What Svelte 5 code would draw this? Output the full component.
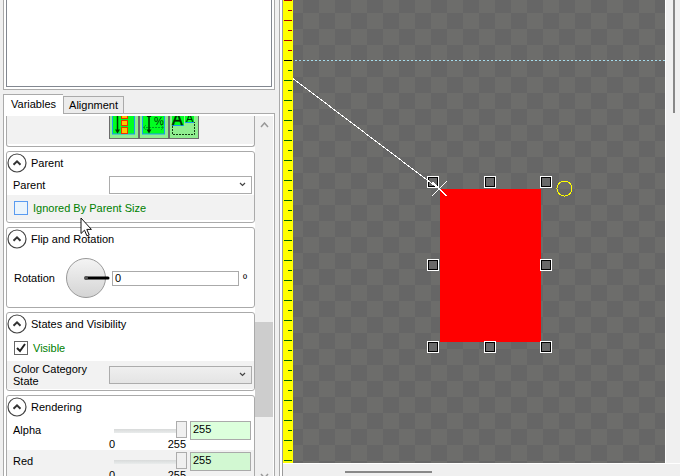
<script>
  const ticks = Array.from({ length: 47 }, (_, i) => ({
    y: i * 10,
    long: i % 2 === 0,
    color: i < 6 ? '#a80000' : i === 6 ? '#000' : '#006400'
  }));
  const handles = [
    [433, 182], [490, 182], [546, 182],
    [433, 265], [546, 265],
    [433, 347], [490, 347], [546, 347]
  ].map(([x, y]) => [x - 293, y]);
  const channels = [
    { name: 'Alpha', value: 255 },
    { name: 'Red', value: 255 }
  ];
  let rotation = $state('0');
  let visible = $state(true);
  let ignored = $state(false);
</script>

{#snippet header(title)}
  <div class="head">
    <button class="toggle" aria-label={`Collapse ${title}`}>
      <svg width="20" height="20" viewBox="0 0 20 20">
        <circle cx="10" cy="10" r="9" fill="#fff" stroke="#444" stroke-width="1.2" />
        <path d="M6.5 11.8 10 8.3l3.5 3.5" fill="none" stroke="#333" stroke-width="2" />
      </svg>
    </button>
    <h2>{title}</h2>
  </div>
{/snippet}

<div class="app">
  <aside>
    <div class="list"><div class="inner"></div></div>
    <div class="tabs" role="tablist">
      <button class="tab active" role="tab" aria-selected="true">Variables</button>
      <button class="tab" role="tab" aria-selected="false">Alignment</button>
    </div>
    <div class="pane">
      <div class="content">
        <section class="units">
          <div class="tools">
            <button aria-label="Units by container">
              <svg width="28" height="22" viewBox="0 0 28 22">
                <rect x="2.500" y="-2" width="22" height="20" fill="#00ff20" stroke="#1a9bf0" />
                <path d="M7.500 0v15" stroke="#003800" stroke-width="1.500" />
                <path d="M5 13.500h5l-2.500 4zM5 0h5L7.500-2z" fill="#003800" />
                <g fill="#ffc400" stroke="#f03000">
                  <rect x="11.500" y="-2.500" width="6" height="5" />
                  <rect x="11.500" y="4.500" width="6" height="5" />
                  <rect x="11.500" y="11.500" width="6" height="6" />
                </g>
              </svg>
            </button>
            <button aria-label="Percentage units">
              <svg width="28" height="22" viewBox="0 0 28 22">
                <rect x="2.500" y="-2" width="22" height="20" fill="#00ff20" stroke="#1a9bf0" />
                <path d="M3 11.500h21" stroke="#00a020" stroke-dasharray="2 1" />
                <path d="M6 9l-2.500 2.500L6 14M21 9l2.500 2.500L21 14" fill="none" stroke="#00b020" />
                <path d="M9 0v15" stroke="#002800" stroke-width="1.500" />
                <path d="M6.500 13.500h5L9 17.500zM6.500 1h5L9-2z" fill="#002800" />
                <text x="14" y="9" font-size="11" fill="#003000">%</text>
              </svg>
            </button>
            <button aria-label="Font scale">
              <svg width="28" height="22" viewBox="0 0 28 22">
                <rect x="2" y="-1" width="12" height="10" fill="#00ff20" />
                <rect x="15" y="-1" width="9" height="7" fill="#00ff20" />
                <path d="M2 9.500h12M15 6.500h9" stroke="#1a9bf0" />
                <text x="2" y="9" font-size="16" fill="#002800" stroke="#002800" stroke-width="0.500">A</text>
                <text x="16" y="6" font-size="11" fill="#002800">A</text>
                <path d="M2.500 10v8.500h22V6" fill="none" stroke="#143c14" stroke-dasharray="2 1" />
              </svg>
            </button>
          </div>
        </section>

        <section>
          {@render header('Parent')}
          <div class="row first">
            <label for="parent">Parent</label>
            <span class="combo">
              <select id="parent"><option></option></select>
              <svg class="arrow" width="7" height="5"><path d="M1 1l2.500 2.500L6 1" /></svg>
            </span>
          </div>
          <label class="check alt">
            <input type="checkbox" class="hover" bind:checked={ignored} />Ignored By Parent Size
          </label>
        </section>

        <section>
          {@render header('Flip and Rotation')}
          <div class="rotate">
            <label for="rotation">Rotation</label>
            <svg width="46" height="42" viewBox="0 0 46 42">
              <defs>
                <linearGradient id="dial" x1="0" y1="0" x2="0" y2="1">
                  <stop offset="0" stop-color="#f4f4f4" /><stop offset="1" stop-color="#d4d4d4" />
                </linearGradient>
              </defs>
              <circle cx="21" cy="21" r="19.500" fill="url(#dial)" stroke="#999" />
              <path d="M21 21h22" stroke="#000" stroke-width="3" stroke-linecap="round" />
              <circle cx="21" cy="21" r="2" fill="#555" />
            </svg>
            <input id="rotation" type="text" bind:value={rotation} />
            <span class="deg">º</span>
          </div>
        </section>

        <section>
          {@render header('States and Visibility')}
          <label class="check tall">
            <input type="checkbox" bind:checked={visible} />Visible
          </label>
          <div class="row alt tall">
            <label for="category">Color Category State</label>
            <span class="combo">
              <select id="category" class="shaded"><option></option></select>
              <svg class="arrow" width="7" height="5"><path d="M1 1l2.500 2.500L6 1" /></svg>
            </span>
          </div>
        </section>

        <section class="rendering">
          {@render header('Rendering')}
          {#each channels as c, i}
            <div class="channel" class:alt={i % 2 === 1}>
              <label for={c.name}>{c.name}</label>
              <div class="slide">
                <input type="range" min="0" max="255" value={c.value} aria-label={c.name} />
                <div class="ends"><span>0</span><span>255</span></div>
              </div>
              <input id={c.name} class="num" type="text" value={c.value} />
            </div>
          {/each}
        </section>
      </div>
      <div class="scroll">
        <svg width="9" height="6"><path d="M1 5l3.500-4L8 5" /></svg>
        <div class="thumb"></div>
        <svg width="9" height="6"><path d="M1 1l3.500 4L8 1" /></svg>
      </div>
    </div>
    <svg class="cursor" width="12" height="20" viewBox="0 0 12 20" aria-hidden="true">
      <path d="M1 1v15.500l3.500-3.300 2.400 5.600 2.300-1-2.400-5.400h4.600z" fill="#fff" stroke="#111" />
    </svg>
  </aside>

  <div class="splitter"></div>

  <main>
    <div class="stage">
      <svg class="ruler" width="10" height="100%">
        {#each ticks as t}
          <rect x={t.long ? 1 : 5} y={t.y} width={t.long ? 8 : 4} height="1" fill={t.color} />
        {/each}
      </svg>
      <svg class="canvas" width="100%" height="100%" shape-rendering="crispEdges">
        <defs>
          <pattern id="checker" x="10" y="13" width="32" height="32" patternUnits="userSpaceOnUse">
            <rect width="32" height="32" fill="#666" />
            <path d="M0 0h16v32h16V16H0z" fill="#6d6d6b" />
          </pattern>
        </defs>
        <rect width="100%" height="100%" fill="url(#checker)" />
        <line x1="2" y1="60.500" x2="100%" y2="60.500" stroke="#a5dcec" stroke-dasharray="2 2" />
        <rect x="147" y="189" width="101" height="153" fill="#f00" />
        {#each handles as [x, y]}
          <rect x={x - 5.5} y={y - 5.5} width="11" height="11" fill="none" stroke="#fff" />
          <rect x={x - 4.5} y={y - 4.5} width="9" height="9" fill="#696969" stroke="#000" />
        {/each}
        <path d="M0 78.500 146 189M139.500 182l14 14M153.500 181.500l-15 15" fill="none" stroke="#fff" />
        <circle cx="271.500" cy="188.500" r="7.500" fill="none" stroke="#ff0" />
      </svg>
      <div class="vbar"><div></div></div>
    </div>
    <div class="hbar"><div></div></div>
  </main>
</div>

<style>
  :global(body) { margin: 0; }
  .app {
    display: flex;
    height: 100vh;
    overflow: hidden;
    background: #f0f0f0;
    color: #000;
    font: 11px/12px "Liberation Sans", Arial, sans-serif;
  }
  .app * { box-sizing: border-box; }
  button, input, select { font: inherit; color: inherit; margin: 0; padding: 0; border-radius: 0; }
  aside { position: relative; width: 275px; padding-left: 3px; display: flex; flex-direction: column; flex: none; }
  .cursor { position: absolute; left: 80px; top: 217px; pointer-events: none; }
  .list {
    height: 90px;
    flex: none;
    border: 1px solid #aaa;
    border-top: 0;
    background: #fff;
    padding: 0 2px 2px 2px;
  }
  .inner { height: 100%; border: 1px solid #828790; border-top: 0; }
  .tabs { display: flex; align-items: flex-end; height: 23px; flex: none; }
  .tab { height: 17px; padding: 0 5px 1px; border: 1px solid #aaa; border-bottom: 0; background: #ececec; }
  .tab.active { height: 20px; padding: 0 7px 2px; margin-bottom: -1px; border-right: 0; background: #fff; position: relative; z-index: 1; }
  .pane { flex: 1; min-height: 0; display: flex; border: 1px solid #aaa; border-bottom: 0; background: #fff; padding: 2px 1px 0 2px; }
  .content { flex: 1; min-width: 0; display: flex; flex-direction: column; gap: 4px; overflow: hidden; }
  section { flex: none; border: 1px solid #aaa; border-radius: 3px; background: #fff; overflow: hidden; }
  .units { border-top: 0; border-radius: 0 0 3px 3px; height: 31px; padding-bottom: 2px; }
  .tools { display: flex; height: 28px; padding-left: 102px; background: #f2f2f2; }
  .tools button { width: 30px; height: 23px; overflow: hidden; border: 1px solid #6c6c6c; border-top: 0; background: #90ee90; }
  .tools svg { display: block; }
  .head { display: flex; align-items: center; height: 21px; padding-top: 1px; gap: 4px; }
  h2 { margin: 0; font: inherit; }
  .toggle { width: 20px; height: 20px; border: 0; background: none; }
  .toggle svg { display: block; }
  .row { display: flex; align-items: center; padding: 0 2px 0 6px; }
  .row.first { height: 22px; padding-top: 2px; }
  .row.tall { height: 28px; margin-bottom: 1px; }
  .row > label { width: 96px; padding-right: 12px; }
  .alt { background: #f2f2f2; }
  .combo { flex: 1; display: flex; position: relative; }
  .combo select { appearance: none; flex: 1; height: 18px; border: 1px solid #acacac; background: #fff; }
  .combo select.shaded { background: linear-gradient(#efefef, #e4e4e4); }
  .arrow { position: absolute; right: 6px; top: 6px; pointer-events: none; }
  .arrow path { fill: none; stroke: #444; stroke-width: 1.2; }
  .check { display: flex; align-items: center; gap: 5px; height: 25px; padding-left: 7px; color: #008000; }
  .check.tall { height: 27px; }
  .check.alt { margin-bottom: 2px; }
  .check input { appearance: none; width: 14px; height: 14px; border: 1px solid #666; background: #fff; }
  .check input.hover { border-color: #5a9bf0; background: #eaf4fc; }
  .check input:checked {
    background: url("data:image/svg+xml,%3Csvg xmlns='http://www.w3.org/2000/svg' viewBox='0 0 12 12'%3E%3Cpath d='M2 6l3 3 5-7' fill='none' stroke='%23222' stroke-width='2'/%3E%3C/svg%3E") #fff;
  }
  .rotate { display: flex; align-items: center; height: 58px; padding: 0 5px 0 7px; }
  .rotate label { width: 51px; }
  .rotate input { width: 127px; height: 15px; margin-left: 1px; padding: 0 2px; border: 1px solid #aaa; }
  .rotate .deg { margin-left: 4px; }
  .channel { display: flex; height: 33px; padding: 4px 3px 0 6px; overflow: hidden; }
  .channel.alt { padding-top: 2px; }
  .channel > label { width: 96px; padding-top: 3px; }
  .slide { width: 81px; }
  .slide input { appearance: none; display: block; width: 73px; height: 17px; margin-left: 5px; background: linear-gradient(#d8dada, #e9ecec) 0 8px / 100% 4px no-repeat; }
  .slide input::-webkit-slider-thumb { appearance: none; width: 11px; height: 17px; border: 1px solid #acacac; background: #f0f0f0; }
  .ends { display: flex; justify-content: space-between; padding-right: 4px; }
  .num { flex: 1; min-width: 0; height: 19px; padding: 0 2px 4px; border: 1px solid #aaa; background: #dcffdc; }
  .alt .num { background: #d2f8d2; }
  .scroll { width: 18px; flex: none; background: #f0f0f0; display: flex; flex-direction: column; align-items: center; padding: 6px 0 0; }
  .scroll path { fill: none; stroke: #999; stroke-width: 1.5; }
  .scroll svg { flex: none; }
  .thumb { width: 100%; height: 95px; margin: 194px 0 56px; flex: none; background: #cdcdcd; }
  .splitter { width: 8px; flex: none; border-right: 1px solid #999; background: linear-gradient(90deg, #f0f0f0 4px, #aaa 4px, #aaa 5px, #fff 5px); }
  main { flex: 1; min-width: 0; display: flex; flex-direction: column; }
  .stage { flex: 1; min-height: 0; display: flex; }
  .ruler { flex: none; background: #ff0; }
  .canvas { flex: 1; min-width: 0; }
  .vbar { width: 15px; flex: none; border-left: 1px solid #fff; }
  .vbar div { width: 2px; height: 113px; margin-left: 7px; background: #888; }
  .hbar { height: 13px; flex: none; border-top: 1px solid #fff; }
  .hbar div { width: 87px; height: 2px; margin: 7px 0 0 62px; background: #888; }
</style>
